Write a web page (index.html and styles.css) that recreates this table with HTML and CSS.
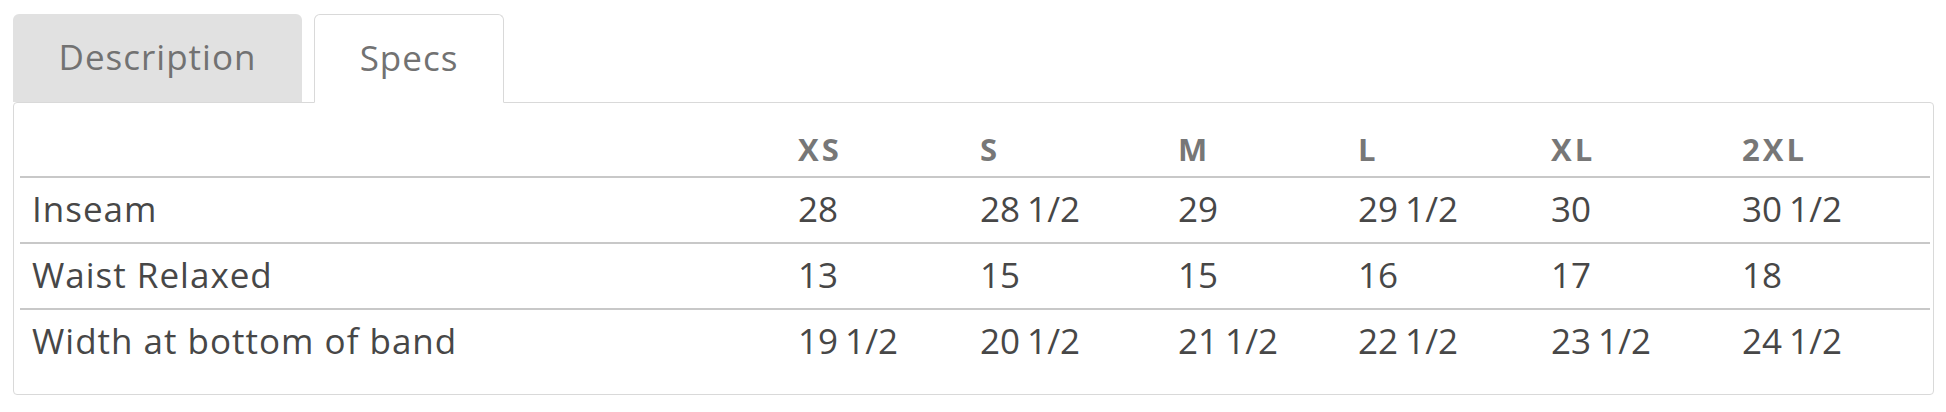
FILE: index.html
```html
<!DOCTYPE html>
<html lang="en">
<head>
<meta charset="utf-8">
<title>Specs</title>
<link rel="stylesheet" href="styles.css">
</head>
<body>
<div class="tabs-wrap">
  <div class="tabs">
    <div class="tab tab-desc">Description</div>
    <div class="tab tab-active">Specs</div>
  </div>
  <div class="panel">
    <table class="specs">
      <colgroup>
        <col class="c-label">
        <col class="c-xs">
        <col class="c-s">
        <col class="c-m">
        <col class="c-l">
        <col class="c-xl">
        <col class="c-2xl">
      </colgroup>
      <thead>
        <tr><th></th><th>XS</th><th>S</th><th>M</th><th>L</th><th>XL</th><th>2XL</th></tr>
      </thead>
      <tbody>
        <tr><td class="label">Inseam</td><td>28</td><td>28 1/2</td><td>29</td><td>29 1/2</td><td>30</td><td>30 1/2</td></tr>
        <tr><td class="label">Waist Relaxed</td><td>13</td><td>15</td><td>15</td><td>16</td><td>17</td><td>18</td></tr>
        <tr><td class="label">Width at bottom of band</td><td>19 1/2</td><td>20 1/2</td><td>21 1/2</td><td>22 1/2</td><td>23 1/2</td><td>24 1/2</td></tr>
      </tbody>
    </table>
  </div>
</div>
</body>
</html>
```
FILE: styles.css
```css
html, body {
  margin: 0;
  padding: 0;
  background: #ffffff;
}

body {
  font-family: "Open Sans", "Liberation Sans", sans-serif;
}

.tabs-wrap {
  padding: 14px 12px 0 13px;
}

.tabs {
  display: flex;
  gap: 12px;
  align-items: flex-end;
}

.tab {
  height: 88px;
  display: flex;
  align-items: center;
  justify-content: center;
  box-sizing: border-box;
  padding: 0 0 3px;
  background: #e1e1e1;
  border-radius: 6px 6px 0 0;
  font-size: 35px;
  letter-spacing: 1px;
  color: #727272;
}

.tab-desc {
  width: 289px;
}

.tab-active {
  position: relative;
  z-index: 1;
  width: 190px;
  height: 89px;
  margin-bottom: -1px;
  background: #ffffff;
  border: 1px solid #d9d9d9;
  border-bottom: 1px solid #ffffff;
}

.panel {
  border: 1px solid #d9d9d9;
  border-radius: 4px;
  padding: 21px 3px 20px 6px;
}

.specs {
  width: 100%;
  border-collapse: collapse;
  table-layout: fixed;
}

.c-label { width: 766px; }
.c-xs { width: 182px; }
.c-s { width: 198px; }
.c-m { width: 180px; }
.c-l { width: 193px; }
.c-xl { width: 191px; }
.c-2xl { width: 200px; }

.specs th {
  height: 49px;
  padding: 0 12px 3px;
  text-align: left;
  vertical-align: middle;
  font-size: 31px;
  font-weight: 700;
  letter-spacing: 3px;
  color: #777777;
  border-bottom: 2px solid #c8c8c8;
}

.specs td {
  height: 61px;
  padding: 0 12px 3px;
  text-align: left;
  vertical-align: middle;
  font-size: 35px;
  letter-spacing: 0;
  word-spacing: -2px;
  color: #474747;
  white-space: nowrap;
}

.specs td.label {
  letter-spacing: 1px;
  word-spacing: 0;
}

.specs tbody tr + tr td {
  border-top: 2px solid #c8c8c8;
}
```
